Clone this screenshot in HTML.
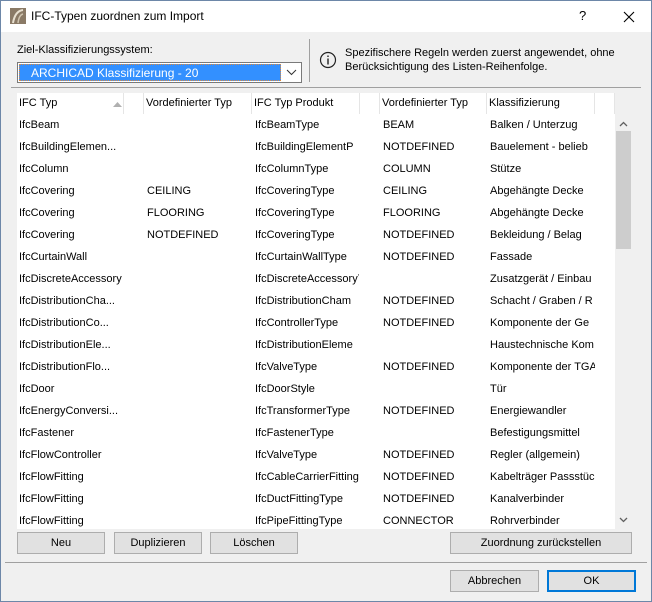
<!DOCTYPE html>
<html><head><style>
*{margin:0;padding:0;box-sizing:border-box}
body{width:652px;height:602px;overflow:hidden;font-family:"Segoe UI","Liberation Sans",sans-serif;font-size:11px;color:#000;background:#f0f0f0;position:relative}
.win{position:absolute;left:0;top:0;width:652px;height:602px;border:1px solid #6d87a8;background:#f0f0f0}
.title{position:absolute;left:0;top:0;width:650px;height:31px;background:#fff}
.title .t{position:absolute;left:30px;top:8px;font-size:12px}
.a{position:absolute}
.tbl{position:absolute;left:16px;top:92px;width:598px;height:436px;background:#fff;overflow:hidden}
.hd{position:absolute;top:0;height:21px;border-right:1px solid #e5e5e5;padding:4px 0 0 2px;white-space:nowrap}
.c{position:absolute;white-space:nowrap;overflow:hidden}
.btn{position:absolute;height:22px;background:#e1e1e1;border:1px solid #adadad;text-align:center;line-height:20px}
</style></head><body><div class="win">
<div class="title">
<svg class="a" style="left:9px;top:7px" width="16" height="16"><rect width="16" height="16" fill="#8a7a66"/><path d="M3 15 Q5 3 13 2" stroke="#e8e0d0" stroke-width="2" fill="none"/><path d="M8 15 Q9 7 13 6" stroke="#cfc4b0" stroke-width="1.5" fill="none"/></svg>
<div class="t">IFC-Typen zuordnen zum Import</div>
<div class="a" style="left:578px;top:7px;font-size:13px">?</div>
<svg class="a" style="left:622px;top:10px" width="12" height="12"><path d="M1 1L11 11M11 1L1 11" stroke="#000" stroke-width="1.1"/></svg>
</div>
<div class="a" style="left:16px;top:43px">Ziel-Klassifizierungssystem:</div>
<div class="a" style="left:16px;top:61px;width:285px;height:21px;background:#fff;border:1px solid #7a7a7a"></div>
<div class="a" style="left:18px;top:63px;width:262px;height:17px;background:#3390ff;border:1px dotted #e08a3c;color:#fff;padding:1px 0 0 11px;font-size:12px">ARCHICAD Klassifizierung - 20</div>
<svg class="a" style="left:285px;top:68px" width="11" height="7"><path d="M1 1L5.5 5.5L10 1" stroke="#333" fill="none"/></svg>
<div class="a" style="left:308px;top:38px;width:1px;height:43px;background:#a0a0a0"></div>
<svg class="a" style="left:318px;top:50px" width="18" height="18"><circle cx="9" cy="9" r="7.5" stroke="#222" fill="none" stroke-width="1.2"/><rect x="8.3" y="7.5" width="1.4" height="6" fill="#222"/><rect x="8.3" y="4.5" width="1.4" height="1.5" fill="#222"/></svg>
<div class="a" style="left:344px;top:45px;line-height:14px">Spezifischere Regeln werden zuerst angewendet, ohne<br>Berücksichtigung des Listen-Reihenfolge.</div>
<div class="a" style="left:10px;top:86px;width:630px;height:1px;background:#a0a0a0"></div>
<div class="tbl">
<div class="hd" style="left:0;width:107px">IFC Typ</div>
<svg class="a" style="left:96px;top:9px" width="9" height="5"><path d="M0 5L4.5 0L9 5Z" fill="#b0b0b0"/></svg>
<div class="hd" style="left:107px;width:20px"></div>
<div class="hd" style="left:127px;width:108px">Vordefinierter Typ</div>
<div class="hd" style="left:235px;width:108px">IFC Typ Produkt</div>
<div class="hd" style="left:343px;width:20px"></div>
<div class="hd" style="left:363px;width:107px">Vordefinierter Typ</div>
<div class="hd" style="left:470px;width:108px">Klassifizierung</div>
<div class="hd" style="left:578px;width:20px"></div>
<div id="rows"></div>
</div>
<div class="a" style="left:614px;top:113px;width:17px;height:415px;background:#f0f0f0"></div>
<div class="a" style="left:615px;top:130px;width:15px;height:118px;background:#cdcdcd"></div>
<svg class="a" style="left:618px;top:120px" width="9" height="6"><path d="M1 5L4.5 1.5L8 5" stroke="#606060" fill="none" stroke-width="1.3"/></svg>
<svg class="a" style="left:618px;top:516px" width="9" height="6"><path d="M1 1L4.5 4.5L8 1" stroke="#606060" fill="none" stroke-width="1.3"/></svg>
<div class="btn" style="left:16px;top:531px;width:88px">Neu</div>
<div class="btn" style="left:113px;top:531px;width:88px">Duplizieren</div>
<div class="btn" style="left:209px;top:531px;width:88px">Löschen</div>
<div class="btn" style="left:449px;top:531px;width:182px">Zuordnung zurückstellen</div>
<div class="a" style="left:4px;top:561px;width:642px;height:1px;background:#a0a0a0"></div>
<div class="btn" style="left:449px;top:569px;width:89px">Abbrechen</div>
<div class="btn" style="left:546px;top:569px;width:89px;border:2px solid #0078d7;line-height:18px">OK</div>
</div>
<script>
const d=[["IfcBeam","","IfcBeamType","BEAM","Balken / Unterzug"],
["IfcBuildingElemen...","","IfcBuildingElementP","NOTDEFINED","Bauelement - belieb"],
["IfcColumn","","IfcColumnType","COLUMN","Stütze"],
["IfcCovering","CEILING","IfcCoveringType","CEILING","Abgehängte Decke"],
["IfcCovering","FLOORING","IfcCoveringType","FLOORING","Abgehängte Decke"],
["IfcCovering","NOTDEFINED","IfcCoveringType","NOTDEFINED","Bekleidung / Belag"],
["IfcCurtainWall","","IfcCurtainWallType","NOTDEFINED","Fassade"],
["IfcDiscreteAccessory","","IfcDiscreteAccessoryT","","Zusatzgerät / Einbau"],
["IfcDistributionCha...","","IfcDistributionCham","NOTDEFINED","Schacht / Graben / R"],
["IfcDistributionCo...","","IfcControllerType","NOTDEFINED","Komponente der Ge"],
["IfcDistributionEle...","","IfcDistributionEleme","","Haustechnische Kom"],
["IfcDistributionFlo...","","IfcValveType","NOTDEFINED","Komponente der TGA"],
["IfcDoor","","IfcDoorStyle","","Tür"],
["IfcEnergyConversi...","","IfcTransformerType","NOTDEFINED","Energiewandler"],
["IfcFastener","","IfcFastenerType","","Befestigungsmittel"],
["IfcFlowController","","IfcValveType","NOTDEFINED","Regler (allgemein)"],
["IfcFlowFitting","","IfcCableCarrierFitting","NOTDEFINED","Kabelträger Passstück"],
["IfcFlowFitting","","IfcDuctFittingType","NOTDEFINED","Kanalverbinder"],
["IfcFlowFitting","","IfcPipeFittingType","CONNECTOR","Rohrverbinder"]];
const x=[2,130,238,366,473],w=[105,105,104,104,105];let h="";
d.forEach((r,i)=>r.forEach((t,j)=>{h+=`<div class="c" style="left:${x[j]}px;top:${26+i*22}px;width:${w[j]}px">${t}</div>`}));
document.getElementById("rows").innerHTML=h;
</script>
</body></html>
